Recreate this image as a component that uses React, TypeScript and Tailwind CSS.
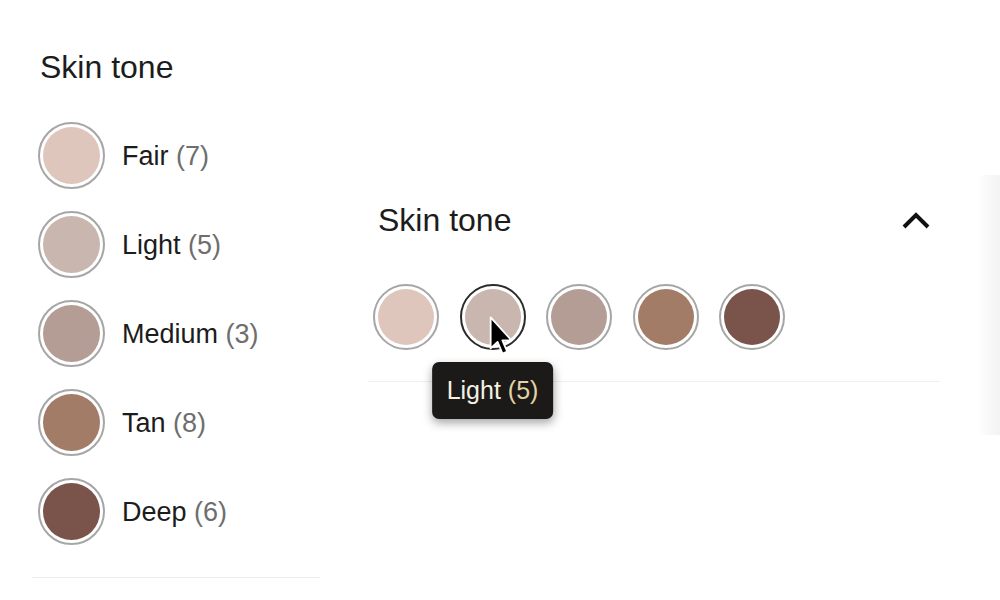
const TONES = [
  { name: 'Fair', count: 7, color: '#dec6bd' },
  { name: 'Light', count: 5, color: '#c9b6ae' },
  { name: 'Medium', count: 3, color: '#b49d95' },
  { name: 'Tan', count: 8, color: '#a27c67' },
  { name: 'Deep', count: 6, color: '#7a544a' },
];

function Swatch({ color, size, active }: { color: string; size: string; active?: boolean }) {
  return (
    <div
      className={`${size} shrink-0 rounded-full bg-white p-[3px] border-2 ${
        active ? 'border-[#2b2b2b]' : 'border-[#a6a6a6]'
      }`}
    >
      <div className="h-full w-full rounded-full" style={{ backgroundColor: color }} />
    </div>
  );
}

function Cursor() {
  return (
    <svg width="24" height="40" viewBox="0 0 17 29" className="absolute left-[29px] top-[32px]">
      <path
        d="M1 1 L1 23.5 L6 18.8 L9.6 27.2 L13 25.8 L9.5 17.6 L16 17.6 Z"
        fill="#000"
        stroke="#fff"
        strokeWidth="1.3"
        strokeLinejoin="round"
      />
    </svg>
  );
}

export default function App() {
  return (
    <div className="flex h-[600px] w-[1000px] overflow-hidden bg-white font-['Liberation_Sans',Arial,sans-serif] text-[#1c1c1c]">
      {/* list version */}
      <div className="ml-[32px] w-[288px] shrink-0 pt-[49px]">
        <h2 className="pl-[8px] text-[32px] leading-[36px]">Skin tone</h2>
        <div className="mt-[37px] flex flex-col gap-[22px] pl-[6px]">
          {TONES.map((t) => (
            <div key={t.name} className="flex items-center gap-[17px]">
              <Swatch color={t.color} size="h-[67px] w-[67px]" />
              <span className="pt-[2px] text-[27px] leading-none">
                {t.name} <span className="text-[#6e6e6e]">({t.count})</span>
              </span>
            </div>
          ))}
        </div>
        <div className="mt-[32px] h-px bg-[#ededed]" />
      </div>

      {/* compact version */}
      <div className="ml-[48px] mt-[175px] flex h-[260px] flex-1">
        <div className="w-[572px] shrink-0">
          <div className="flex items-center justify-between pt-[27px] pl-[10px] pr-[10px]">
            <h2 className="text-[32px] leading-[36px]">Skin tone</h2>
            <svg width="30" height="20" viewBox="0 0 30 20" className="mr-[-1px] mt-[2px]">
              <path d="M3 16 L15 4 L27 16" fill="none" stroke="#111" strokeWidth="4" />
            </svg>
          </div>
          <div className="mt-[46px] flex gap-[20.5px] pl-[5px]">
            {TONES.map((t, i) => (
              <div key={t.name} className="relative">
                <Swatch color={t.color} size="h-[66px] w-[66px]" active={i === 1} />
                {i === 1 && (
                  <>
                    <Cursor />
                    <div className="absolute left-1/2 top-[78px] z-10 -translate-x-1/2 whitespace-nowrap rounded-[7px] bg-[#1b1a19] px-[15px] py-[14px] text-[25px] leading-[29px] text-[#f4f0e2] shadow-[0_4px_10px_rgba(0,0,0,0.35)]">
                      Light <span className="text-[#e3d2a5]">(5)</span>
                    </div>
                  </>
                )}
              </div>
            ))}
          </div>
          <div className="mt-[31px] h-px bg-[#efefef]" />
        </div>
        <div className="ml-[40px] w-[20px] bg-gradient-to-r from-[#fdfdfd] to-[#f3f3f3]" />
      </div>
    </div>
  );
}
